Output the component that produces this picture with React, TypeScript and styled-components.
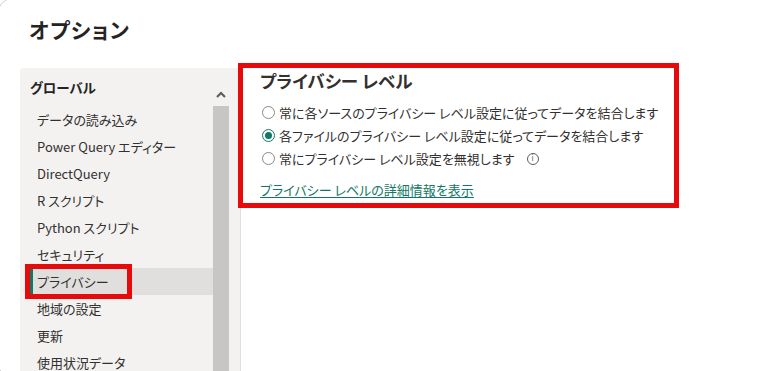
import React from "react";
import styled, { createGlobalStyle } from "styled-components";

const Global = createGlobalStyle`
  html, body { margin: 0; padding: 0; background: #ffffff; overflow: hidden; }
  body {
    font-family: "Noto Sans CJK JP", "Noto Sans", sans-serif;
    color: #323130;
    font-feature-settings: "palt";
  }
  * { box-sizing: border-box; }
`;

const Dialog = styled.div`
  margin: -2px 0 0 -2px;
  width: 790px;
  height: 380px;
  border: 1px solid #cfcfcf;
  border-radius: 14px;
  background: #ffffff;
  display: flex;
  flex-direction: column;
  padding: 16px 0 0 21px;
`;

const Title = styled.h1`
  margin: 0;
  font-size: 21px;
  line-height: 28px;
  font-weight: 700;
  color: #252423;
  padding-left: 9px;
  letter-spacing: 1.2px;
`;

const Body = styled.div`
  margin-top: 25px;
  display: flex;
  align-items: flex-start;
  flex: 1;
`;

const Panel = styled.div`
  display: flex;
  width: 209px;
  height: 320px;
  background: #f3f2f1;
  border-top-left-radius: 4px;
`;

const Nav = styled.nav`
  width: 193px;
  display: flex;
  flex-direction: column;
`;

const NavHeader = styled.div`
  font-size: 13.5px;
  font-weight: 700;
  line-height: 22px;
  padding: 8px 0 8px 10px;
  color: #252423;
`;

const NavItem = styled.div<{ $active?: boolean }>`
  position: relative;
  margin-left: 10px;
  height: 27px;
  display: flex;
  align-items: center;
  font-size: 13px;
  padding-left: ${(p) => (p.$active ? "4px" : "7px")};
  border-left: ${(p) => (p.$active ? "3px solid #117865" : "none")};
  background: ${(p) => (p.$active ? "#e1dfdd" : "transparent")};
  color: #323130;
  white-space: nowrap;
`;

const Highlight = styled.span`
  position: absolute;
  left: -8px;
  top: -4px;
  width: 107px;
  height: 35px;
  border: 5px solid #e60a0a;
  pointer-events: none;
`;

const ScrollBar = styled.div`
  width: 16px;
  display: flex;
  flex-direction: column;
  background: #f3f2f1;
`;

const ScrollButton = styled.div`
  height: 38px;
  display: flex;
  align-items: center;
  justify-content: center;
  padding-top: 14px;
`;

const ScrollThumb = styled.div`
  flex: 1;
  background: #c8c6c4;
`;

const Strip = styled.div`
  width: 12px;
  height: 320px;
  background: #f3f2f1;
  border-right: 1px solid #e1dfdd;
`;

const Section = styled.section`
  margin: -5px 0 0 -3px;
  width: 441px;
  height: 145px;
  border: 5px solid #e60a0a;
  padding: 2px 0 0 17px;
  display: flex;
  flex-direction: column;
  position: relative;
`;

const Heading = styled.h2`
  margin: 0;
  font-size: 17.5px;
  font-weight: 700;
  line-height: 22px;
  color: #323130;
`;

const Options = styled.div`
  margin-top: 9px;
  display: flex;
  flex-direction: column;
`;

const Option = styled.label`
  height: 23px;
  display: flex;
  align-items: center;
  font-size: 13px;
  color: #323130;
  white-space: nowrap;
`;

const Radio = styled.span<{ $checked?: boolean }>`
  width: 13px;
  height: 13px;
  margin-left: 2px;
  margin-right: 4px;
  border-radius: 50%;
  border: 1px solid ${(p) => (p.$checked ? "#117865" : "#8a8886")};
  display: inline-flex;
  align-items: center;
  justify-content: center;
  flex-shrink: 0;
  &::after {
    content: "";
    width: 7px;
    height: 7px;
    border-radius: 50%;
    background: ${(p) => (p.$checked ? "#117865" : "transparent")};
  }
`;

const InfoIcon = styled.span`
  margin-left: 12px;
  width: 12px;
  height: 12px;
  border-radius: 50%;
  border: 1px solid #605e5c;
  display: inline-flex;
  align-items: center;
  justify-content: center;
  font-family: "DejaVu Sans", sans-serif;
  font-size: 8px;
  line-height: 1;
  color: #605e5c;
`;

const Link = styled.a`
  margin-top: 10px;
  font-size: 13px;
  line-height: 20px;
  color: #117865;
  text-decoration: underline;
  text-underline-offset: 2px;
  align-self: flex-start;
  cursor: pointer;
`;

const Chevron = () => (
  <svg width="10" height="7" viewBox="0 0 10 7">
    <path d="M1 6 L5 2 L9 6" fill="none" stroke="#605e5c" strokeWidth="2.2" />
  </svg>
);

const navItems = [
  "データの読み込み",
  "Power Query エディター",
  "DirectQuery",
  "R スクリプト",
  "Python スクリプト",
  "セキュリティ",
  "プライバシー",
  "地域の設定",
  "更新",
  "使用状況データ",
];

const options = [
  { text: "常に各ソースのプライバシー レベル設定に従ってデータを結合します", checked: false },
  { text: "各ファイルのプライバシー レベル設定に従ってデータを結合します", checked: true },
  { text: "常にプライバシー レベル設定を無視します", checked: false, info: true },
];

export default function App() {
  return (
    <>
      <Global />
      <Dialog>
        <Title>オプション</Title>
        <Body>
          <Panel>
            <Nav>
              <NavHeader>グローバル</NavHeader>
              {navItems.map((item) => (
                <NavItem key={item} $active={item === "プライバシー"}>
                  {item}
                  {item === "プライバシー" && <Highlight />}
                </NavItem>
              ))}
            </Nav>
            <ScrollBar>
              <ScrollButton>
                <Chevron />
              </ScrollButton>
              <ScrollThumb />
            </ScrollBar>
          </Panel>
          <Strip />
          <Section>
            <Heading>プライバシー レベル</Heading>
            <Options>
              {options.map((o) => (
                <Option key={o.text}>
                  <Radio $checked={o.checked} />
                  {o.text}
                  {o.info && <InfoIcon>i</InfoIcon>}
                </Option>
              ))}
            </Options>
            <Link>プライバシー レベルの詳細情報を表示</Link>
          </Section>
        </Body>
      </Dialog>
    </>
  );
}
